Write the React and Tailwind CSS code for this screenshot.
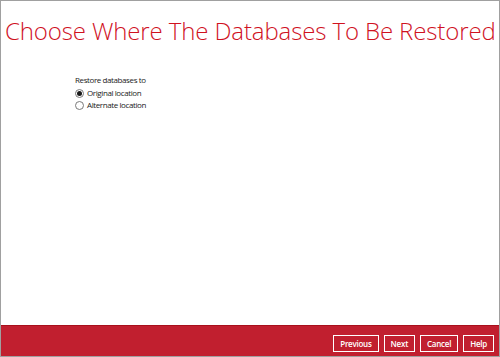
import React, { useState } from "react";

// Radio option row
function RadioOption({ label, checked, onSelect }) {
  return (
    <label className="flex items-center gap-[3px] h-[12px] cursor-pointer" onClick={onSelect}>
      <span className="w-[9px] h-[9px] rounded-full border border-[#7a7a7a] bg-white flex items-center justify-center">
        {checked && <span className="w-[5px] h-[5px] rounded-full bg-[#1a1a1a]" />}
      </span>
      <span className="text-[8px] text-[#222] tracking-[-0.4px]">{label}</span>
    </label>
  );
}

function FooterButton({ children }) {
  return (
    <button className="h-[17px] px-[6px] border border-white text-white text-[8px] font-semibold tracking-[-0.25px] leading-none bg-[#c11f2f]">
      {children}
    </button>
  );
}

export default function App() {
  const [target, setTarget] = useState("original");

  return (
    <div
      className="w-[500px] h-[357px] flex flex-col border border-[#a0a0a0] bg-white"
      style={{ fontFamily: '"Open Sans", "Liberation Sans", sans-serif' }}
    >
      <div className="flex-1 flex flex-col">
        <h1 className="mt-[14px] ml-[4px] text-[24px] font-light text-[#d0121f] leading-[32px] whitespace-nowrap tracking-[-0.12px]">
          Choose Where The Databases To Be Restored
        </h1>
        <div className="ml-[74px] mt-[27px] flex flex-col">
          <div className="text-[8px] text-[#222] h-[13px] tracking-[-0.4px]">Restore databases to</div>
          <RadioOption
            label="Original location"
            checked={target === "original"}
            onSelect={() => setTarget("original")}
          />
          <RadioOption
            label="Alternate location"
            checked={target === "alternate"}
            onSelect={() => setTarget("alternate")}
          />
        </div>
      </div>
      <div className="h-[31px] bg-[#c11f2f] border-t border-[#a8101c] flex items-end justify-end gap-[5px] pr-[5px] pb-[4px]">
        <FooterButton>Previous</FooterButton>
        <FooterButton>Next</FooterButton>
        <FooterButton>Cancel</FooterButton>
        <FooterButton>Help</FooterButton>
      </div>
    </div>
  );
}
